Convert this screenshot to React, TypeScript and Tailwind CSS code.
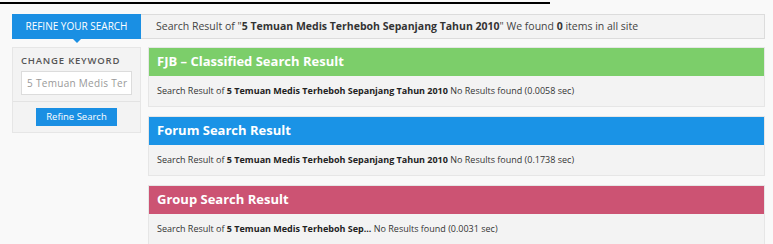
import React from "react"

const font = { fontFamily: '"Open Sans", "DejaVu Sans", sans-serif' }

const sections = [
  { title: "FJB – Classified Search Result", color: "bg-[#7cce6a]", keyword: "5 Temuan Medis Terheboh Sepanjang Tahun 2010", time: "0.0058" },
  { title: "Forum Search Result", color: "bg-[#1a93e6]", keyword: "5 Temuan Medis Terheboh Sepanjang Tahun 2010", time: "0.1738" },
  { title: "Group Search Result", color: "bg-[#cc5373]", keyword: "5 Temuan Medis Terheboh Sep...", time: "0.0031" },
]

function ResultSection({ title, color, keyword, time }: { title: string; color: string; keyword: string; time: string }) {
  return (
    <div className="border border-[#e6e6e6] bg-[#f3f3f3]">
      <div className={`${color} h-[28px] flex items-center px-[8px] text-white font-bold text-[13px]`}>
        {title}
      </div>
      <div className="h-[30px] flex items-center px-[8px] text-[9px] text-[#333]">
        <span>Search Result of&nbsp;</span>
        <span className="font-bold text-[#222]">{keyword}</span>
        <span>&nbsp;No Results found ({time} sec)</span>
      </div>
    </div>
  )
}

export default function App() {
  return (
    <div style={font} className="w-[773px] h-[244px] bg-[#f9f9f9] overflow-hidden relative">
      <div className="absolute left-0 top-[2px] w-[550px] h-[2px] bg-black" />
      <div className="flex pl-[12px] pr-[8px] pt-[14px]">
        {/* Sidebar */}
        <div className="w-[129px] shrink-0 flex flex-col">
          <div className="relative h-[25px] bg-[#1a8fe3] text-white text-[10px] flex items-center justify-center">
            REFINE YOUR SEARCH
            <div className="absolute left-1/2 -translate-x-1/2 top-full w-0 h-0 border-l-[4px] border-r-[4px] border-t-[4px] border-l-transparent border-r-transparent border-t-[#1a8fe3]" />
          </div>
          <div className="mt-[8px] bg-[#f3f3f3] border border-[#e6e6e6]">
            <div className="px-[8px] pt-[6px] pb-[6px] border-b border-[#e3e3e3]">
              <div className="text-[9.5px] font-semibold tracking-[0.8px] text-[#555]">CHANGE KEYWORD</div>
              <div className="mt-[3px] h-[24px] bg-white border border-[#dcdcdc] flex items-center px-[5px] text-[10px] text-[#999] overflow-hidden whitespace-nowrap tracking-[0.3px]">
                5 Temuan Medis Ter
              </div>
            </div>
            <div className="flex justify-center py-[6px]">
              <div className="w-[81px] h-[18px] bg-[#1a8fe3] text-white text-[9.5px] flex items-center justify-center">
                Refine Search
              </div>
            </div>
          </div>
        </div>
        {/* Main */}
        <div className="flex-1 flex flex-col">
          <div className="h-[25px] bg-[#f3f3f3] border border-[#dcdcdc] border-l-0 flex items-center px-[15px] text-[10.5px] text-[#444] whitespace-nowrap">
            Search Result of "<span className="font-bold text-[#333]">5 Temuan Medis Terheboh Sepanjang Tahun 2010</span>" We found&nbsp;<span className="font-bold text-[#333]">0</span>&nbsp;items in all site
          </div>
          <div className="ml-[7px] mt-[8px] flex flex-col gap-[9px]">
            {sections.map((s) => (
              <ResultSection key={s.title} {...s} />
            ))}
          </div>
        </div>
      </div>
    </div>
  )
}
